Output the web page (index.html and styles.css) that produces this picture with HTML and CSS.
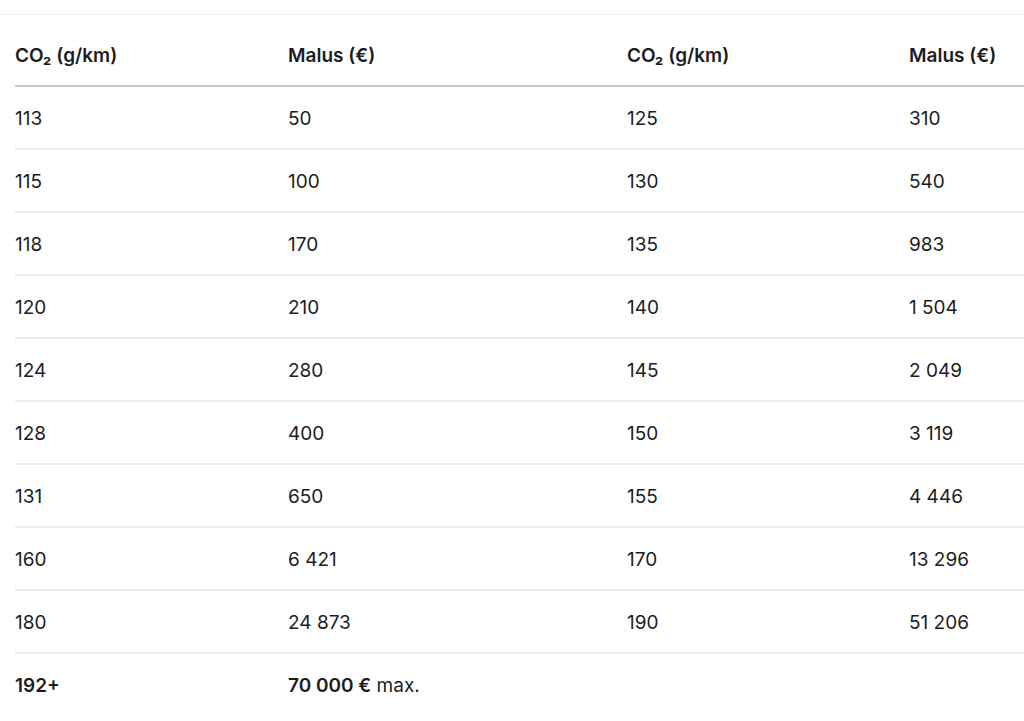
FILE: index.html
```html
<!DOCTYPE html>
<html lang="fr">
<head>
<meta charset="utf-8">
<title>Malus CO₂</title>
<link rel="stylesheet" href="styles.css">
</head>
<body>
<div class="page">
  <div class="divider"></div>
  <table class="malus">
    <colgroup>
      <col class="c1"><col class="c2"><col class="c3"><col class="c4">
    </colgroup>
    <thead>
      <tr><th>CO₂ (g/km)</th><th>Malus (€)</th><th>CO₂ (g/km)</th><th>Malus (€)</th></tr>
    </thead>
    <tbody>
      <tr><td>113</td><td>50</td><td>125</td><td>310</td></tr>
      <tr><td>115</td><td>100</td><td>130</td><td>540</td></tr>
      <tr><td>118</td><td>170</td><td>135</td><td>983</td></tr>
      <tr><td>120</td><td>210</td><td>140</td><td>1 504</td></tr>
      <tr><td>124</td><td>280</td><td>145</td><td>2 049</td></tr>
      <tr><td>128</td><td>400</td><td>150</td><td>3 119</td></tr>
      <tr><td>131</td><td>650</td><td>155</td><td>4 446</td></tr>
      <tr><td>160</td><td>6 421</td><td>170</td><td>13 296</td></tr>
      <tr><td>180</td><td>24 873</td><td>190</td><td>51 206</td></tr>
      <tr class="last"><td><strong>192+</strong></td><td><strong>70 000 €</strong> max.</td><td></td><td></td></tr>
    </tbody>
  </table>
</div>
</body>
</html>
```

FILE: styles.css
```css
html, body {
  margin: 0;
  padding: 0;
  background: #ffffff;
}
body {
  font-family: Inter, "Noto Sans", "Liberation Sans", sans-serif;
  color: #1c1c1e;
  overflow: hidden;
}
.page {
  padding-top: 14px;
}
.divider {
  height: 1px;
  background: #f0f0f0;
  margin-bottom: 9px;
}
.malus {
  border-collapse: collapse;
  margin-left: 15px;
  width: 1009px;
  table-layout: fixed;
  font-size: 19px;
  line-height: 23px;
}
.c1 { width: 273px; }
.c2 { width: 339px; }
.c3 { width: 282px; }
.c4 { width: 115px; }
.malus th,
.malus td {
  text-align: left;
  padding: 20px 0 18px;
  white-space: nowrap;
  vertical-align: middle;
}
.malus th {
  font-weight: 600;
  border-bottom: 2px solid #c9c9c9;
}
.malus td {
  font-weight: 400;
  border-bottom: 2px solid #ebebeb;
}
.malus tr.last td {
  border-bottom: none;
}
.malus strong {
  font-weight: 600;
}
```
